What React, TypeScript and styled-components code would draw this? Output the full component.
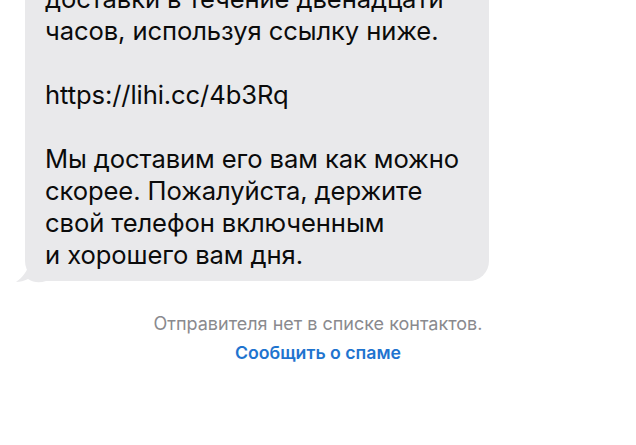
import React from "react";
import styled, { createGlobalStyle } from "styled-components";

const Global = createGlobalStyle`
  html, body { margin: 0; padding: 0; background: #ffffff; }
  body { overflow: hidden; font-family: Inter, "Noto Sans", sans-serif; }
`;

const Page = styled.div`
  width: 636px;
  height: 445px;
  overflow: hidden;
  display: flex;
  flex-direction: column;
  background: #fff;
`;

const Row = styled.div`
  display: flex;
  padding-left: 25px;
  margin-top: -27px;
`;

const Bubble = styled.div`
  position: relative;
  width: 464px;
  box-sizing: border-box;
  background: #e9e9eb;
  border-radius: 20px;
  padding: 10px 10px 10px 20px;
  color: #0b0b0b;
  font-size: 25.6px;
  line-height: 32px;
  letter-spacing: -0.1px;
`;

const Line = styled.div<{ $gap?: boolean }>`
  white-space: nowrap;
  margin-bottom: ${(p) => (p.$gap ? "32px" : "0")};
`;

const Tail = styled.svg`
  position: absolute;
  left: -9px;
  bottom: -4px;
`;

const Notice = styled.div`
  margin-top: 33px;
  display: flex;
  flex-direction: column;
  align-items: center;
  gap: 9px;
`;

const Gray = styled.div`
  font-size: 18px;
  color: #8a8a8e;
  line-height: 20px;
`;

const Link = styled.div`
  font-size: 17.7px;
  font-weight: 600;
  color: #1f74cf;
  line-height: 20px;
`;

export default function App() {
  return (
    <Page>
      <Global />
      <Row>
        <Bubble>
          <Line>доставки в течение двенадцати</Line>
          <Line $gap>часов, используя ссылку ниже.</Line>
          <Line $gap>https://lihi.cc/4b3Rq</Line>
          <Line>Мы доставим его вам как можно</Line>
          <Line>скорее. Пожалуйста, держите</Line>
          <Line>свой телефон включенным</Line>
          <Line>и хорошего вам дня.</Line>
          <Tail width="30" height="24" viewBox="0 0 30 24">
            <path d="M14 0 L30 0 L30 20 C24 22 18 22 12 18 C8 20 4 21 0 21 C6 17 12 10 14 0 Z" fill="#e9e9eb" />
          </Tail>
        </Bubble>
      </Row>
      <Notice>
        <Gray>Отправителя нет в списке контактов.</Gray>
        <Link>Сообщить о спаме</Link>
      </Notice>
    </Page>
  );
}
